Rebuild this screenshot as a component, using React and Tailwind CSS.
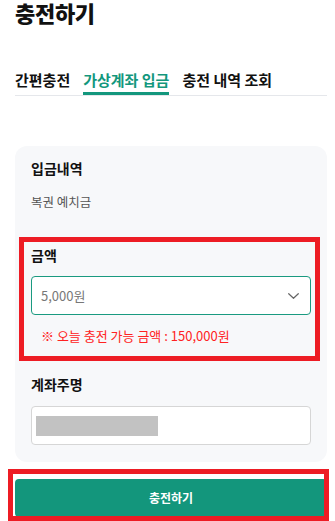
import React from "react";

function Chevron() {
  return (
    <svg width="11" height="6" viewBox="0 0 11 6" fill="none">
      <path d="M0.7 0.7l4.8 4.6 4.8-4.6" stroke="#666" strokeWidth="1.2" strokeLinecap="round" strokeLinejoin="round" />
    </svg>
  );
}

export default function App() {
  const font = { fontFamily: '"Noto Sans CJK KR", "Noto Sans", sans-serif' };
  return (
    <div className="relative w-[335px] h-[521px] overflow-hidden bg-white" style={font}>
      <div className="px-[15px]">
        {/* title */}
        <h1 className="text-[22px] leading-[25px] font-black text-[#111] tracking-[-0.3px]">충전하기</h1>

        {/* tabs */}
        <div className="mt-[44px] flex gap-[13px] border-b border-[#e5e7eb] w-[312px]">
          <span className="pb-px border-b-[3px] border-transparent text-[15px] leading-[22px] font-bold text-[#111]">간편충전</span>
          <span className="pb-px border-b-[3px] border-[#13977d] text-[15px] leading-[22px] font-bold text-[#13977d]">가상계좌 입금</span>
          <span className="pb-px border-b-[3px] border-transparent text-[15px] leading-[22px] font-bold text-[#111]">충전 내역 조회</span>
        </div>

        {/* card */}
        <div className="mt-[50px] w-[312px] rounded-[12px] bg-[#f7f8fa] px-[16px] pt-[12px] pb-[17px]">
          <p className="text-[14px] leading-[20px] font-bold text-[#111]">입금내역</p>
          <p className="mt-[14px] text-[12.5px] leading-[20px] text-[#555]">복권 예치금</p>

          <p className="mt-[33px] text-[14px] leading-[20px] font-bold text-[#111]">금액</p>
          <div className="mt-[11px] h-[39px] w-[280px] rounded-[4px] border border-[#1a9a80] bg-white flex items-center justify-between pl-[9px] pr-[11px]">
            <span className="text-[13px] text-[#777]">5,000원</span>
            <Chevron />
          </div>
          <p className="mt-[11px] pl-[10px] text-[13px] leading-[20px] text-[#ff2222]">※ 오늘 충전 가능 금액 : 150,000원</p>

          <p className="mt-[28px] text-[14px] leading-[20px] font-bold text-[#111]">계좌주명</p>
          <div className="mt-[12px] h-[39px] w-[280px] rounded-[4px] border border-[#d6d6d6] bg-white flex items-center pl-[4px]">
            <div className="h-[20px] w-[122px] bg-[#c2c2c2]" />
          </div>
        </div>

        {/* button */}
        <button className="mt-[17px] h-[38px] w-[312px] rounded-[4px] bg-[#13967c] text-white text-[12px] font-bold">
          충전하기
        </button>
      </div>

      {/* annotation boxes */}
      <div className="absolute left-[19px] top-[237px] w-[301px] h-[124px] border-[5px] border-[#ed1c24]" />
      <div className="absolute left-[8px] top-[469px] w-[321px] h-[52px] border-[5px] border-[#ed1c24]" />
    </div>
  );
}
